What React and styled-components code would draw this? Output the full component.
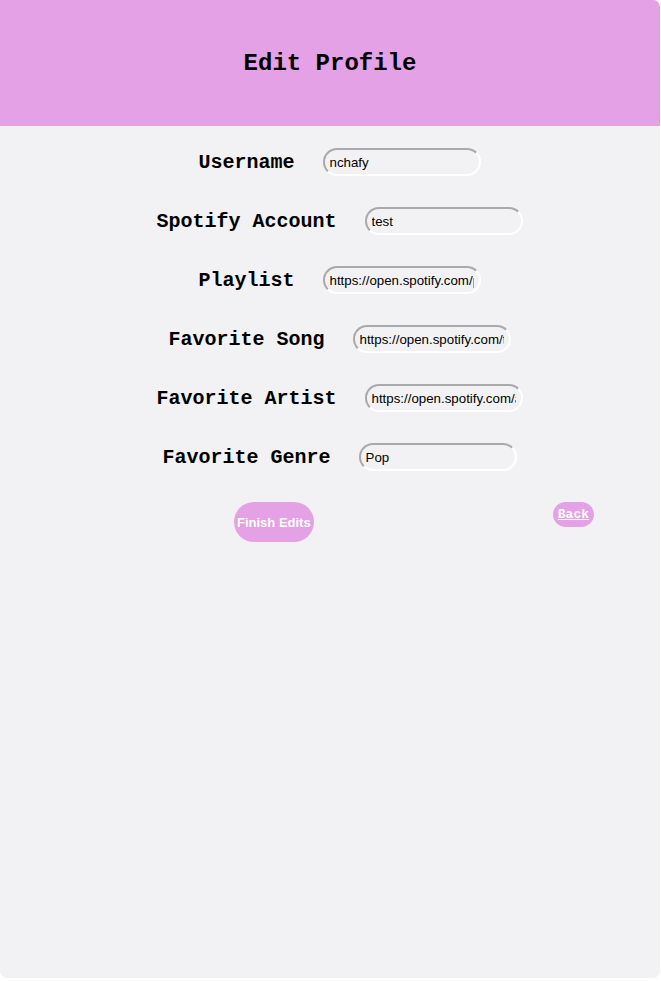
import React from 'react';
import styled, { createGlobalStyle } from 'styled-components';

const GlobalStyle = createGlobalStyle`
  body {
    margin: 0;
    background: #ffffff;
    font-family: "Liberation Sans", Arial, sans-serif;
  }
`;

const Page = styled.div`
  width: 660px;
  height: 978px;
  background: #f2f2f4;
  border-radius: 0 7px 7px 7px;
  overflow: hidden;
`;

const Header = styled.header`
  height: 126px;
  background: #e5a1e5;
  display: flex;
  align-items: center;
  justify-content: center;
`;

const Title = styled.h1`
  margin: 0;
  font-family: "Liberation Mono", "Courier New", monospace;
  font-size: 24px;
  font-weight: bold;
  color: #000;
`;

const Form = styled.form`
  display: flex;
  flex-direction: column;
  align-items: center;
  padding-top: 22px;
  gap: 31px;
`;

const Row = styled.div`
  display: flex;
  align-items: center;
  padding-left: 19px;
`;

const Label = styled.label`
  font-family: "Liberation Mono", "Courier New", monospace;
  font-size: 20px;
  font-weight: bold;
  color: #000;
  margin-right: 28px;
`;

const Input = styled.input`
  box-sizing: border-box;
  width: 158px;
  height: 28px;
  border: 2px solid #a9a9a9;
  border-right-color: #ffffff;
  border-bottom-color: #ffffff;
  border-radius: 14px;
  background: transparent;
  padding: 0 5px;
  font-family: "Liberation Sans", Arial, sans-serif;
  font-size: 13.3px;
  color: #000;
  outline: none;
`;

const Actions = styled.div`
  display: flex;
  justify-content: space-between;
  align-items: flex-start;
  padding: 31px 66px 0 234px;
`;

const PillButton = styled.button`
  border: none;
  background: #e5a1e5;
  color: #fff;
  font-weight: bold;
  font-size: 13px;
  cursor: pointer;
  font-family: ${p => (p.$mono ? '"Liberation Mono", "Courier New", monospace' : '"Liberation Sans", Arial, sans-serif')};
  text-decoration: ${p => (p.$mono ? 'underline' : 'none')};
  height: ${p => (p.$mono ? '25px' : '40px')};
  padding: ${p => (p.$mono ? '0 5px' : '0 3px')};
  border-radius: 20px;
`;

const fields = [
  ['Username', 'nchafy'],
  ['Spotify Account', 'test'],
  ['Playlist', 'https://open.spotify.com/playlist/37i9dQZF1DX'],
  ['Favorite Song', 'https://open.spotify.com/track/4uLU6hMCjMI75M1A2tKUQC'],
  ['Favorite Artist', 'https://open.spotify.com/artist/06HL4z0CvFAxyc27GXpf02'],
  ['Favorite Genre', 'Pop'],
];

export default function App() {
  return (
    <>
      <GlobalStyle />
      <Page>
        <Header>
          <Title>Edit Profile</Title>
        </Header>
        <Form onSubmit={e => e.preventDefault()}>
          {fields.map(([label, value]) => (
            <Row key={label}>
              <Label>{label}</Label>
              <Input defaultValue={value} />
            </Row>
          ))}
        </Form>
        <Actions>
          <PillButton>Finish Edits</PillButton>
          <PillButton $mono>Back</PillButton>
        </Actions>
      </Page>
    </>
  );
}
